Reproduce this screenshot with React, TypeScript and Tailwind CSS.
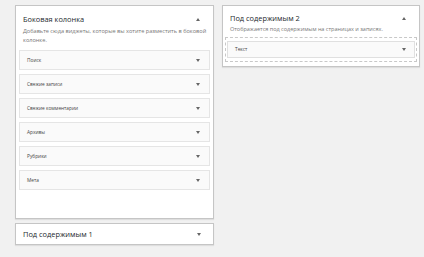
import React from "react";

const Up = () => (
  <svg width="4" height="3" viewBox="0 0 4 3" className="block"><polygon points="0,3 4,3 2,0" fill="#666" /></svg>
);
const Down = () => (
  <svg width="4" height="3" viewBox="0 0 4 3" className="block"><polygon points="0,0 4,0 2,3" fill="#666" /></svg>
);

const Row = ({ label }: { label: string }) => (
  <div className="h-[20px] border border-[#e5e5e5] bg-[#fafafa] flex items-center justify-between pl-[7px] pr-[9px]">
    <span className="text-[4.8px] text-[#444] leading-none">{label}</span>
    <Down />
  </div>
);

export default function App() {
  const rows = ["Поиск", "Свежие записи", "Свежие комментарии", "Архивы", "Рубрики", "Мета"];
  return (
    <div className="w-[424px] h-[257px] bg-[#f1f1f1] overflow-hidden" style={{ fontFamily: '"Open Sans", "Noto Sans", sans-serif' }}>
      <div className="flex pl-[15px] pt-[5px] gap-[8px] items-start">
        <div className="w-[199px] flex flex-col gap-[4px]">
          <div className="h-[214px] bg-white border border-[#c5c5c5] shadow-[0_1px_1px_rgba(0,0,0,0.08)] flex flex-col px-[3px]">
            <div className="flex items-center justify-between pt-[8px] pl-[4px] pr-[10px]">
              <span className="text-[7.4px] leading-[10px] text-[#23282d]">Боковая колонка</span>
              <Up />
            </div>
            <p className="pl-[4px] pr-[1px] mt-[3px] text-[5.6px] leading-[9px] text-[#777]">
              Добавьте сюда виджеты, которые вы хотите разместить в боковой колонке.
            </p>
            <div className="flex flex-col gap-[4px] mt-[5px]">
              {rows.map((r) => (
                <Row key={r} label={r} />
              ))}
            </div>
          </div>
          <div className="h-[22px] bg-white border border-[#c5c5c5] shadow-[0_1px_1px_rgba(0,0,0,0.08)] flex items-center justify-between pl-[7px] pr-[12px]">
            <span className="text-[7.4px] leading-[10px] text-[#23282d]">Под содержимым 1</span>
            <Down />
          </div>
        </div>
        <div className="w-[198px] h-[62px] bg-white border border-[#c5c5c5] shadow-[0_1px_1px_rgba(0,0,0,0.08)] flex flex-col px-[2px]">
          <div className="flex items-center justify-between pt-[7px] pl-[5px] pr-[11px]">
            <span className="text-[7.4px] leading-[10px] text-[#23282d]">Под содержимым 2</span>
            <Up />
          </div>
          <p className="pl-[5px] mt-[2px] text-[5.5px] leading-[9px] text-[#777]">
            Отображается под содержимым на страницах и записях.
          </p>
          <div className="mt-[3px] border border-dashed border-[#c8c8c8] px-[1px] py-[3px]">
            <div className="h-[17px] border border-[#e0e0e0] bg-[#fafafa] flex items-center justify-between pl-[7px] pr-[8px]">
              <span className="text-[4.8px] text-[#444] leading-none">Текст</span>
              <Down />
            </div>
          </div>
        </div>
      </div>
    </div>
  );
}
